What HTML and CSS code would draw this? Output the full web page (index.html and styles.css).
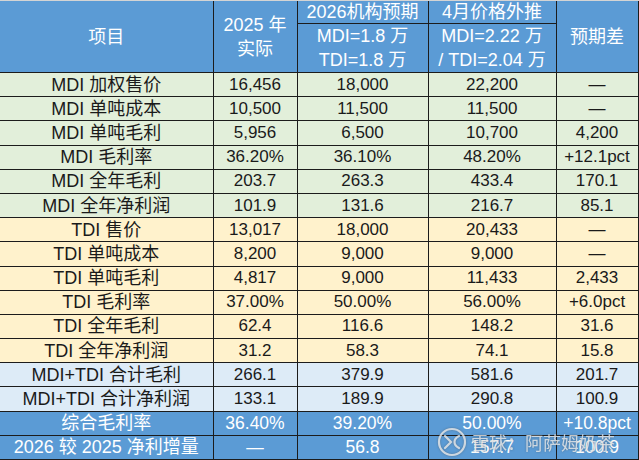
FILE: index.html
```html
<!DOCTYPE html>
<html lang="zh">
<head>
<meta charset="utf-8">
<link rel="stylesheet" href="styles.css">
</head>
<body>
<div class="sheet">
<table class="grid">
  <colgroup>
    <col class="c1"><col class="c2"><col class="c3"><col class="c4"><col class="c5">
  </colgroup>
  <thead>
    <tr class="h1">
      <th rowspan="2">项目</th>
      <th rowspan="2" class="two">2025 年<br>实际</th>
      <th>2026机构预期</th>
      <th>4月价格外推</th>
      <th rowspan="2">预期差</th>
    </tr>
    <tr class="h2">
      <th class="two">MDI=1.8 万<br>TDI=1.8 万</th>
      <th class="two">MDI=2.22 万<br>/ TDI=2.04 万</th>
    </tr>
  </thead>
  <tbody>
    <tr class="g"><td>MDI 加权售价</td><td>16,456</td><td>18,000</td><td>22,200</td><td>—</td></tr>
    <tr class="g"><td>MDI 单吨成本</td><td>10,500</td><td>11,500</td><td>11,500</td><td>—</td></tr>
    <tr class="g"><td>MDI 单吨毛利</td><td>5,956</td><td>6,500</td><td>10,700</td><td>4,200</td></tr>
    <tr class="g"><td>MDI 毛利率</td><td>36.20%</td><td>36.10%</td><td>48.20%</td><td>+12.1pct</td></tr>
    <tr class="g"><td>MDI 全年毛利</td><td>203.7</td><td>263.3</td><td>433.4</td><td>170.1</td></tr>
    <tr class="g"><td>MDI 全年净利润</td><td>101.9</td><td>131.6</td><td>216.7</td><td>85.1</td></tr>
    <tr class="y"><td>TDI 售价</td><td>13,017</td><td>18,000</td><td>20,433</td><td>—</td></tr>
    <tr class="y"><td>TDI 单吨成本</td><td>8,200</td><td>9,000</td><td>9,000</td><td>—</td></tr>
    <tr class="y"><td>TDI 单吨毛利</td><td>4,817</td><td>9,000</td><td>11,433</td><td>2,433</td></tr>
    <tr class="y"><td>TDI 毛利率</td><td>37.00%</td><td>50.00%</td><td>56.00%</td><td>+6.0pct</td></tr>
    <tr class="y"><td>TDI 全年毛利</td><td>62.4</td><td>116.6</td><td>148.2</td><td>31.6</td></tr>
    <tr class="y"><td>TDI 全年净利润</td><td>31.2</td><td>58.3</td><td>74.1</td><td>15.8</td></tr>
    <tr class="b"><td>MDI+TDI 合计毛利</td><td>266.1</td><td>379.9</td><td>581.6</td><td>201.7</td></tr>
    <tr class="b"><td>MDI+TDI 合计净利润</td><td>133.1</td><td>189.9</td><td>290.8</td><td>100.9</td></tr>
    <tr class="f"><td>综合毛利率</td><td>36.40%</td><td>39.20%</td><td>50.00%</td><td>+10.8pct</td></tr>
    <tr class="f"><td>2026 较 2025 净利增量</td><td>—</td><td>56.8</td><td>157.7</td><td>100.9</td></tr>
  </tbody>
</table>
<div class="mark">
  <svg class="logo" width="30" height="30" viewBox="0 0 30 30" aria-hidden="true">
    <circle cx="15" cy="15" r="13" fill="none" stroke="currentColor" stroke-width="2.2"/>
    <path d="M8 9 L14 15 L8 21" fill="none" stroke="currentColor" stroke-width="2.2" stroke-linecap="round"/>
    <path d="M22 9 C16 12 16 18 22 21" fill="none" stroke="currentColor" stroke-width="2.2" stroke-linecap="round"/>
  </svg>
  <span class="mark-text">雪球：阿萨姆奶茶</span>
</div>
</div>
</body>
</html>
```

FILE: styles.css
```css
html, body {
  margin: 0;
  padding: 0;
  background: #d4d4d4;
}
body {
  padding-top: 1px;
  font-family: "Liberation Sans", "Noto Sans CJK SC", sans-serif;
}
.sheet {
  position: relative;
  width: 639px;
  height: 459px;
  overflow: hidden;
}
.grid {
  border-collapse: collapse;
  table-layout: fixed;
  width: 638px;
  font-size: 17px;
  color: #1a1a1a;
}
.c1 { width: 213px; }
.c2 { width: 84px; }
.c3 { width: 131px; }
.c4 { width: 128px; }
.c5 { width: 82px; }
.grid th, .grid td {
  border: 1px solid #1c1c1c;
  padding: 0;
  text-align: center;
  vertical-align: middle;
  line-height: 22px;
  white-space: nowrap;
  overflow: hidden;
}
.grid thead th {
  background: #5b9bd5;
  color: #ffffff;
  font-weight: normal;
  font-size: 18px;
}
.grid tr:first-child th { border-top: none; }
.grid th:first-child, .grid td:first-child { border-left: none; }
.grid td:first-child { font-size: 18px; }
.grid .h1 th { height: 22px; }
.grid .h2 th { height: 46px; }
.grid th.two { line-height: 24px; }
.grid tbody td { height: 23.2px; }
.g td { background: #e2efda; }
.y td { background: #fff2cc; }
.b td { background: #ddebf7; }
.f td {
  background: #5b9bd5;
  color: #ffffff;
  font-size: 17.5px;
}
.mark {
  position: absolute;
  left: 437px;
  top: 426px;
  display: flex;
  align-items: center;
  gap: 4px;
  color: rgba(236, 236, 236, 0.8);
  filter: drop-shadow(0 0 1px rgba(60, 60, 60, 0.5));
}
.logo { display: block; }
.mark-text {
  font-size: 18px;
}
```
